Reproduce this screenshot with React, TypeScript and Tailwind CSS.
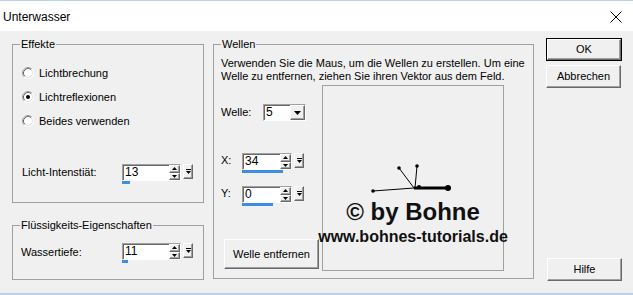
import React from "react";

const raised =
  "border border-t-white border-l-white border-b-[#696969] border-r-[#696969] bg-[#f0f0f0] shadow-[inset_-1px_-1px_0_#a0a0a0]";
const sunken =
  "border border-t-[#a0a0a0] border-l-[#a0a0a0] border-b-white border-r-white bg-white shadow-[inset_1px_1px_0_#696969]";

function Radio({ checked = false }: { checked?: boolean }) {
  return (
    <svg width="12" height="12" viewBox="0 0 12 12" className="shrink-0">
      <circle cx="6" cy="6" r="4.5" fill="#ffffff" />
      <path d="M2.11 9.89 A5.5 5.5 0 0 1 9.89 2.11" fill="none" stroke="#a0a0a0" />
      <path d="M9.89 2.11 A5.5 5.5 0 0 1 2.11 9.89" fill="none" stroke="#ffffff" />
      <path d="M2.82 9.18 A4.5 4.5 0 0 1 9.18 2.82" fill="none" stroke="#696969" />
      <path d="M9.18 2.82 A4.5 4.5 0 0 1 2.82 9.18" fill="none" stroke="#e3e3e3" />
      {checked && <circle cx="6" cy="6" r="2" fill="#000000" />}
    </svg>
  );
}

function RadioRow({ label, checked }: { label: string; checked?: boolean }) {
  return (
    <div className="flex h-[16px] items-center gap-[5px]">
      <Radio checked={checked} />
      <span>{label}</span>
    </div>
  );
}

function Arrow({ up = false }: { up?: boolean }) {
  return (
    <svg width="5" height="3" viewBox="0 0 5 3">
      <path d={up ? "M0 3 L5 3 L2.5 0 Z" : "M0 0 L5 0 L2.5 3 Z"} fill="#000000" />
    </svg>
  );
}

interface SpinProps {
  value: string;
  boxWidth: string;
  barWidth: string;
}

// numeric edit with up/down buttons, slider popout and the blue value bar
function Spin({ value, boxWidth, barWidth }: SpinProps) {
  return (
    <div className="flex flex-col">
      <div className="flex items-start">
        <div className={`flex h-[17px] ${boxWidth} ${sunken}`}>
          <span className="flex-1 pl-[2px] text-[12px] leading-[15px]">{value}</span>
          <div className="flex w-[11px] flex-col">
            <div className={`flex flex-1 items-center justify-center ${raised}`}>
              <Arrow up />
            </div>
            <div className={`flex flex-1 items-center justify-center ${raised}`}>
              <Arrow />
            </div>
          </div>
        </div>
        <div className={`ml-[2px] flex h-[15px] w-[10px] items-center justify-center ${raised}`}>
          <svg width="5" height="7" viewBox="0 0 5 7">
            <path d="M0 1.5 H5" stroke="#000000" />
            <path d="M0 3 L5 3 L2.5 6 Z" fill="#000000" />
          </svg>
        </div>
      </div>
      <div className={`h-[3px] bg-[#3d8ee2] ${barWidth}`} />
    </div>
  );
}

function Button({ label, isDefault = false, className = "" }: { label: string; isDefault?: boolean; className?: string }) {
  if (isDefault) {
    return (
      <div className={`border border-black ${className}`}>
        <div className={`flex h-full w-full items-center justify-center ${raised}`}>{label}</div>
      </div>
    );
  }
  return <div className={`flex items-center justify-center ${raised} ${className}`}>{label}</div>;
}

export default function App() {
  return (
    <div className="flex h-[295px] w-[633px] flex-col overflow-hidden bg-[#f0f0f0] font-['Liberation_Sans',Arial,sans-serif] text-[11px] text-black">
      {/* Title bar */}
      <div className="flex h-[31px] shrink-0 items-center justify-between border-t border-[#b9d1ea] bg-white pl-[3px] pr-[11px] pt-[1px]">
        <span className="text-[12px]">Unterwasser</span>
        <svg width="12" height="12" viewBox="0 0 12 12">
          <path d="M0.5 0.5 L11.5 11.5 M11.5 0.5 L0.5 11.5" stroke="#000000" strokeWidth="1" />
        </svg>
      </div>

      {/* Dialog body */}
      <div className="flex h-[262px] shrink-0 pl-[12px] pt-[6px]">
        {/* Left column */}
        <div className="flex w-[192px] flex-col">
          <fieldset className="h-[166px] w-[192px] border border-[#a0a0a0]">
            <legend className="ml-[7px] px-[1px] leading-[14px]">Effekte</legend>
            <div className="flex flex-col pl-[9px] pt-[14px]">
              <div className="flex flex-col gap-[8px]">
                <RadioRow label="Lichtbrechung" />
                <RadioRow label="Lichtreflexionen" checked />
                <RadioRow label="Beides verwenden" />
              </div>
              <div className="mt-[35px] flex items-start">
                <span className="h-[17px] w-[100px] leading-[17px]">Licht-Intenstiät:</span>
                <Spin value="13" boxWidth="w-[59px]" barWidth="w-[8px]" />
              </div>
            </div>
          </fieldset>

          <fieldset className="mt-[15px] h-[62px] w-[192px] border border-[#a0a0a0]">
            <legend className="ml-[7px] px-[1px] leading-[14px]">Flüssigkeits-Eigenschaften</legend>
            <div className="flex items-start pl-[8px] pt-[11px]">
              <span className="h-[17px] w-[101px] leading-[19px]">Wassertiefe:</span>
              <Spin value="11" boxWidth="w-[59px]" barWidth="w-[6px]" />
            </div>
          </fieldset>
        </div>

        {/* Wellen */}
        <fieldset className="ml-[9px] h-[242px] w-[321px] border border-[#a0a0a0]">
          <legend className="ml-[7px] px-[1px] leading-[14px]">Wellen</legend>
          <div className="pl-[7px] pt-[6px]">
            <p className="leading-[13px]">
              Verwenden Sie die Maus, um die Wellen zu erstellen. Um eine
              <br />
              Welle zu entfernen, ziehen Sie ihren Vektor aus dem Feld.
            </p>
            <div className="mt-[2px] flex">
              <div className="flex w-[101px] flex-col">
                <div className="mt-[19px] flex h-[17px] items-center">
                  <span className="w-[42px]">Welle:</span>
                  <div className={`flex h-[17px] w-[43px] ${sunken}`}>
                    <span className="flex-1 pl-[2px] text-[12px] leading-[15px]">5</span>
                    <div className={`flex w-[15px] items-center justify-center ${raised}`}>
                      <svg width="7" height="4" viewBox="0 0 7 4">
                        <path d="M0 0 L7 0 L3.5 4 Z" fill="#000000" />
                      </svg>
                    </div>
                  </div>
                </div>

                <div className="mt-[32px] flex items-start">
                  <span className="h-[17px] w-[21px] leading-[15px]">X:</span>
                  <Spin value="34" boxWidth="w-[50px]" barWidth="w-[41px]" />
                </div>

                <div className="mt-[13px] flex items-start">
                  <span className="h-[17px] w-[21px] leading-[15px]">Y:</span>
                  <Spin value="0" boxWidth="w-[50px]" barWidth="w-[31px]" />
                </div>

                <Button label="Welle entfernen" className="ml-[3px] mt-[33px] h-[30px] w-[95px]" />
              </div>

              {/* Preview field */}
              <div className="relative h-[186px] w-[182px] border border-[#a0a0a0]">
                <svg width="182" height="186" viewBox="0 0 182 186" className="absolute left-0 top-0">
                  <path d="M50 105 L91 102" stroke="#000000" strokeWidth="1" />
                  <path d="M76 82 L91 102" stroke="#000000" strokeWidth="1" />
                  <path d="M94 80 L92 102" stroke="#000000" strokeWidth="1" />
                  <path d="M91 102 L125 102" stroke="#000000" strokeWidth="3" />
                  <circle cx="50" cy="105" r="1.8" fill="#000000" />
                  <circle cx="76" cy="82" r="1.8" fill="#000000" />
                  <circle cx="94" cy="80" r="1.8" fill="#000000" />
                  <circle cx="96" cy="101" r="2" fill="#000000" />
                  <circle cx="125" cy="102" r="3" fill="#000000" />
                </svg>
                <div className="absolute left-1/2 top-[114px] flex -translate-x-1/2 flex-col items-center whitespace-nowrap font-bold text-[#111111]">
                  <span className="text-[24px] leading-[24px]">© by Bohne</span>
                  <span className="mt-[5px] text-[16px] leading-[16px]">www.bohnes-tutorials.de</span>
                </div>
              </div>
            </div>
          </div>
        </fieldset>

        {/* Right buttons */}
        <div className="ml-[12px] flex w-[76px] flex-col pb-[12px] pt-[1px]">
          <Button label="OK" isDefault className="h-[23px] w-[76px]" />
          <Button label="Abbrechen" className="mt-[4px] h-[23px] w-[75px]" />
          <Button label="Hilfe" className="ml-[1px] mt-auto h-[23px] w-[75px]" />
        </div>
      </div>

      <div className="h-[2px] shrink-0 bg-[#b9d1ea]" />
    </div>
  );
}
